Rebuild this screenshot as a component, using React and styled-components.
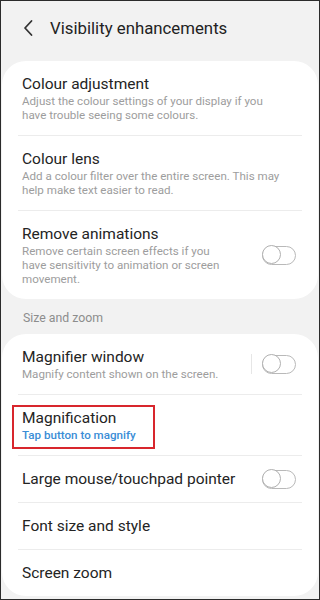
import React from "react";
import styled, { createGlobalStyle } from "styled-components";

const Global = createGlobalStyle`
  html, body { margin: 0; padding: 0; background: #f2f2f2; }
  * { box-sizing: border-box; }
  body { font-family: Roboto, "Noto Sans", "Liberation Sans", sans-serif; }
`;

const Frame = styled.div`
  width: 320px;
  height: 600px;
  border: 1px solid #2b2b2b;
  background: #f2f2f2;
  overflow: hidden;
  display: flex;
  flex-direction: column;
`;

const Header = styled.div`
  height: 60px;
  display: flex;
  align-items: center;
  padding: 0 0 6px 21px;
  gap: 16px;
`;

const Title = styled.h1`
  margin: 0;
  font-size: 16.8px;
  font-weight: 400;
  color: #222;
`;

const Card = styled.div`
  background: #fff;
  margin: 0 1px;
  border-radius: 24px;
  padding: 0 16px;
  display: flex;
  flex-direction: column;
`;

const Row = styled.div`
  position: relative;
  display: flex;
  align-items: center;
  padding: 13px 6px 13px 4px;
  & + & { border-top: 1px solid #ececec; }
`;

const Texts = styled.div`
  position: relative;
  flex: 1;
  min-width: 0;
  display: flex;
  flex-direction: column;
`;

const ItemTitle = styled.div`
  font-size: 15.5px;
  line-height: 20px;
  color: #242424;
`;

const Sub = styled.div`
  font-size: 11.6px;
  line-height: 14px;
  color: ${(p) => (p.$accent ? "#3a8dd6" : "#9d9d9d")};
  font-weight: ${(p) => (p.$accent ? 500 : 400)};
  padding-right: ${(p) => (p.$narrow ? "30px" : "12px")};
`;

const Highlight = styled.div`
  position: absolute;
  left: -10px;
  top: -3px;
  width: 143px;
  bottom: -7px;
  border: 2px solid #d8262d;
  pointer-events: none;
`;

const Section = styled.div`
  height: 35px;
  display: flex;
  align-items: center;
  padding: 3px 0 0 22px;
  font-size: 12.3px;
  color: #8d8d8d;
`;

const VLine = styled.div`
  width: 1px;
  height: 20px;
  background: #e6e6e6;
  margin-right: 10px;
`;

const Toggle = styled.div`
  position: relative;
  width: 34px;
  height: 19px;
  border: 1.5px solid #b9b9b9;
  border-radius: 10px;
  flex-shrink: 0;
  &::before {
    content: "";
    position: absolute;
    left: -1.5px;
    top: -1.5px;
    width: 19px;
    height: 19px;
    border-radius: 50%;
    border: 1.5px solid #b0b0b0;
    background: #fff;
    box-sizing: border-box;
  }
`;

const Back = () => (
  <svg width="12" height="18" viewBox="0 0 12 18" fill="none">
    <path d="M9.5 2 L3 9 L9.5 16" stroke="#333" strokeWidth="1.8" strokeLinecap="round" strokeLinejoin="round" />
  </svg>
);

export default function App() {
  return (
    <>
      <Global />
      <Frame>
        <Header>
          <Back />
          <Title>Visibility enhancements</Title>
        </Header>
        <Card>
          <Row>
            <Texts>
              <ItemTitle>Colour adjustment</ItemTitle>
              <Sub>Adjust the colour settings of your display if you have trouble seeing some colours.</Sub>
            </Texts>
          </Row>
          <Row>
            <Texts>
              <ItemTitle>Colour lens</ItemTitle>
              <Sub>Add a colour filter over the entire screen. This may help make text easier to read.</Sub>
            </Texts>
          </Row>
          <Row>
            <Texts>
              <ItemTitle>Remove animations</ItemTitle>
              <Sub $narrow>Remove certain screen effects if you have sensitivity to animation or screen movement.</Sub>
            </Texts>
            <Toggle />
          </Row>
        </Card>
        <Section>Size and zoom</Section>
        <Card>
          <Row>
            <Texts>
              <ItemTitle>Magnifier window</ItemTitle>
              <Sub>Magnify content shown on the screen.</Sub>
            </Texts>
            <VLine />
            <Toggle />
          </Row>
          <Row>
            <Texts>
              <Highlight />
              <ItemTitle>Magnification</ItemTitle>
              <Sub $accent>Tap button to magnify</Sub>
            </Texts>
          </Row>
          <Row>
            <Texts>
              <ItemTitle>Large mouse/touchpad pointer</ItemTitle>
            </Texts>
            <Toggle />
          </Row>
          <Row>
            <Texts>
              <ItemTitle>Font size and style</ItemTitle>
            </Texts>
          </Row>
          <Row>
            <Texts>
              <ItemTitle>Screen zoom</ItemTitle>
            </Texts>
          </Row>
        </Card>
      </Frame>
    </>
  );
}
